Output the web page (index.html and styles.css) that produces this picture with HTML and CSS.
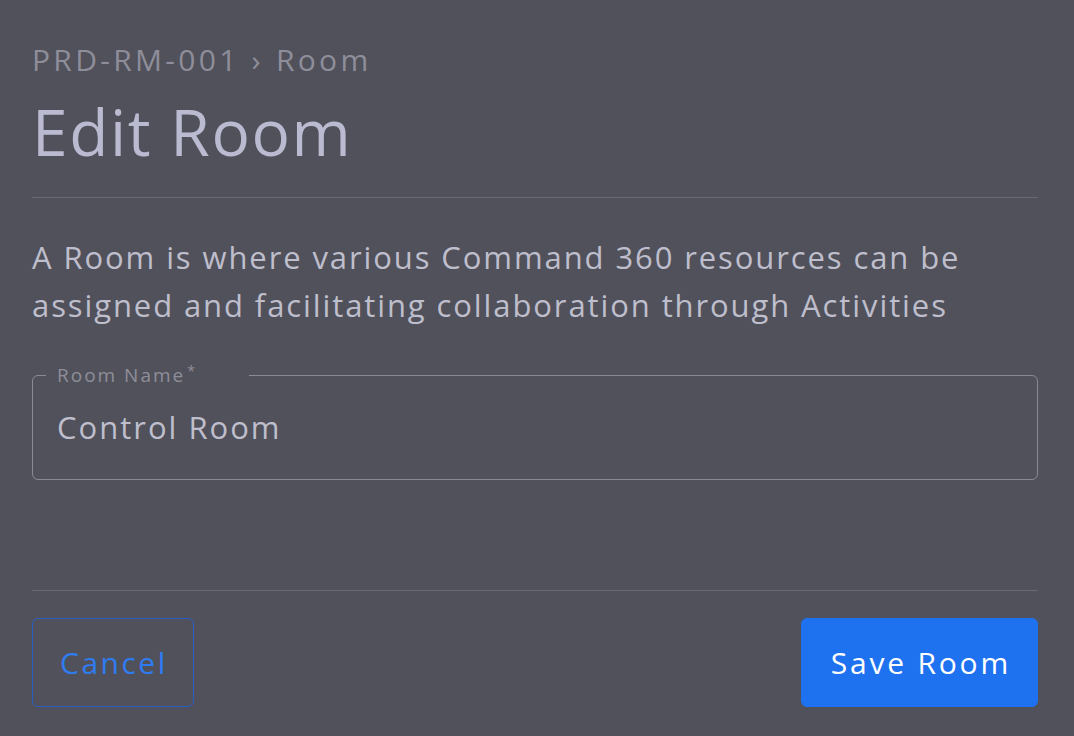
FILE: index.html
```html
<!DOCTYPE html>
<html lang="en">
<head>
<meta charset="utf-8">
<title>Edit Room</title>
<link rel="stylesheet" href="styles.css">
</head>
<body>
<main class="page">
  <header class="head">
    <nav class="crumbs"><span>PRD-RM-001</span><span class="sep">›</span><span>Room</span></nav>
    <h1 class="title">Edit Room</h1>
  </header>
  <p class="desc">A Room is where various Command 360 resources can be assigned and facilitating collaboration through Activities</p>
  <fieldset class="field">
    <legend class="label">Room Name<sup>*</sup></legend>
    <div class="value">Control Room</div>
  </fieldset>
  <footer class="actions">
    <button class="btn cancel" type="button">Cancel</button>
    <button class="btn save" type="button">Save Room</button>
  </footer>
</main>
</body>
</html>
```
FILE: styles.css
```css
html, body {
  margin: 0;
  padding: 0;
  background: #51515b;
}
body {
  font-family: "Open Sans", "Noto Sans", sans-serif;
}
.page {
  padding: 40px 36px 29px 32px;
  box-sizing: border-box;
  height: 736px;
  display: flex;
  flex-direction: column;
}
.crumbs {
  font-size: 30px;
  line-height: 40px;
  letter-spacing: 3.3px;
  color: #8e8e9a;
  display: flex;
  gap: 12px;
}
.title {
  margin: 16px 0 0;
  font-size: 64px;
  line-height: 72px;
  letter-spacing: 1.6px;
  font-weight: 400;
  color: #babad0;
  padding-bottom: 29px;
  border-bottom: 1px solid #6a6a72;
}
.desc {
  margin: 35px 0 0;
  font-size: 31px;
  line-height: 48px;
  letter-spacing: 1.9px;
  color: #bebecc;
}
.field {
  margin: 36px 0 0;
  border: 1px solid #8a8a94;
  border-radius: 6px;
  padding: 0 24px 10px;
}
.label {
  margin-left: -11px;
  padding: 0 52px 0 11px;
  font-size: 19px;
  line-height: 20px;
  letter-spacing: 2px;
  color: #8e8e99;
}
.label sup {
  font-size: 14px;
  vertical-align: 6px;
  line-height: 0;
  margin-left: 2px;
}
.value {
  font-size: 31px;
  line-height: 84px;
  letter-spacing: 2px;
  color: #bebecc;
}
.actions {
  margin-top: 110px;
  border-top: 1px solid #6a6a72;
  padding-top: 27px;
  display: flex;
  justify-content: space-between;
}
.btn {
  font-family: inherit;
  font-size: 30px;
  height: 89px;
  border-radius: 6px;
  cursor: pointer;
}
.cancel {
  background: transparent;
  border: 1px solid #2a5ec0;
  color: #2f7cf2;
  letter-spacing: 2.5px;
  padding: 0 25px 0 27px;
}
.save {
  background: #1f72ef;
  border: 1px solid #1f72ef;
  color: #ffffff;
  letter-spacing: 2.8px;
  padding: 0 26px 0 29px;
}
```
